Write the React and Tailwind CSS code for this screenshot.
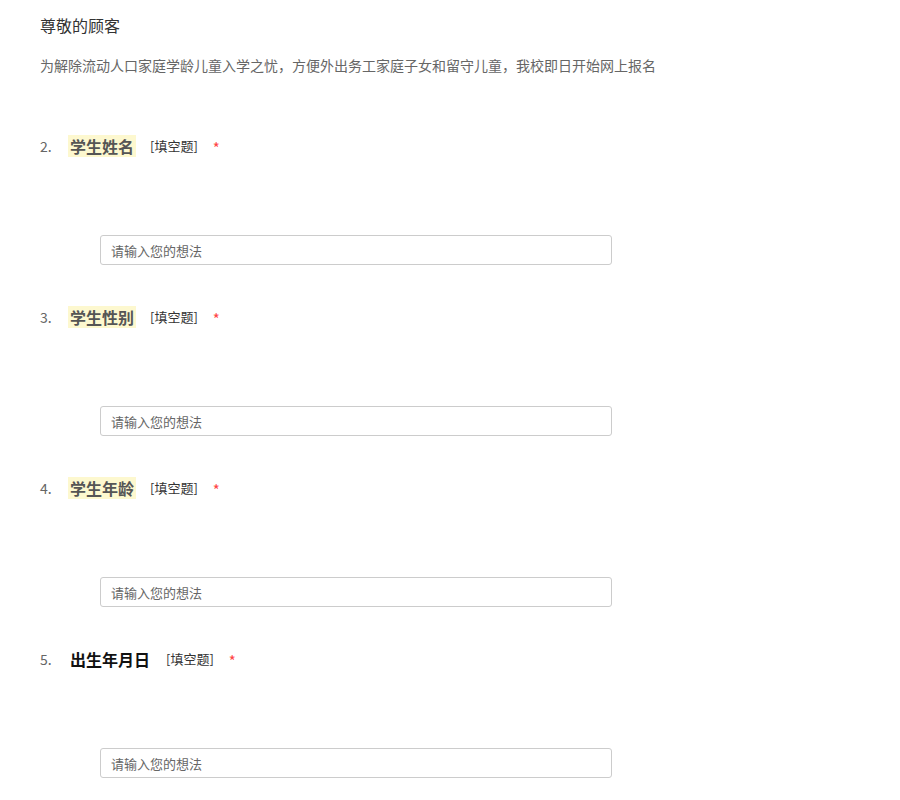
import React from 'react';

const questions = [
  { no: 2, title: '学生姓名', marked: true },
  { no: 3, title: '学生性别', marked: true },
  { no: 4, title: '学生年龄', marked: true },
  { no: 5, title: '出生年月日', marked: false },
];

export default function App() {
  return (
    <div
      className="min-h-screen bg-white px-10 pt-[15px]"
      style={{ fontFamily: '"Microsoft YaHei", "Noto Sans CJK SC", sans-serif' }}
    >
      {/* 问卷说明 */}
      <h1 className="text-[16px] leading-[20px] text-[#333]">尊敬的顾客</h1>
      <p className="mt-[21px] text-[14px] leading-[18px] text-[#666]">
        为解除流动人口家庭学龄儿童入学之忧，方便外出务工家庭子女和留守儿童，我校即日开始网上报名
      </p>

      {/* 题目 */}
      <div className="mt-[61px]">
        {questions.map((q) => (
          <div key={q.no} className="h-[171px]">
            <div className="flex items-center h-[22px]">
              <span className="w-[30px] text-[14px] text-[#666]">{q.no}.</span>
              <span
                className={`px-[2px] -ml-[2px] text-[16px] leading-[22px] font-bold ${
                  q.marked ? 'bg-[#fdf8cf] text-[#555]' : 'text-[#111]'
                }`}
              >
                {q.title}
              </span>
              <span className="ml-[14px] text-[13px] text-[#333]">[填空题]</span>
              <span className="ml-[15px] mt-[5px] text-[15px] text-[#f44]">*</span>
            </div>
            <div className="mt-[78px] ml-[60px]">
              <input
                type="text"
                placeholder="请输入您的想法"
                className="w-[512px] h-[30px] rounded-[3px] border border-[#ccc] px-[10px] text-[13px] text-[#333] placeholder:text-[#666] outline-none"
              />
            </div>
          </div>
        ))}
      </div>
    </div>
  );
}
